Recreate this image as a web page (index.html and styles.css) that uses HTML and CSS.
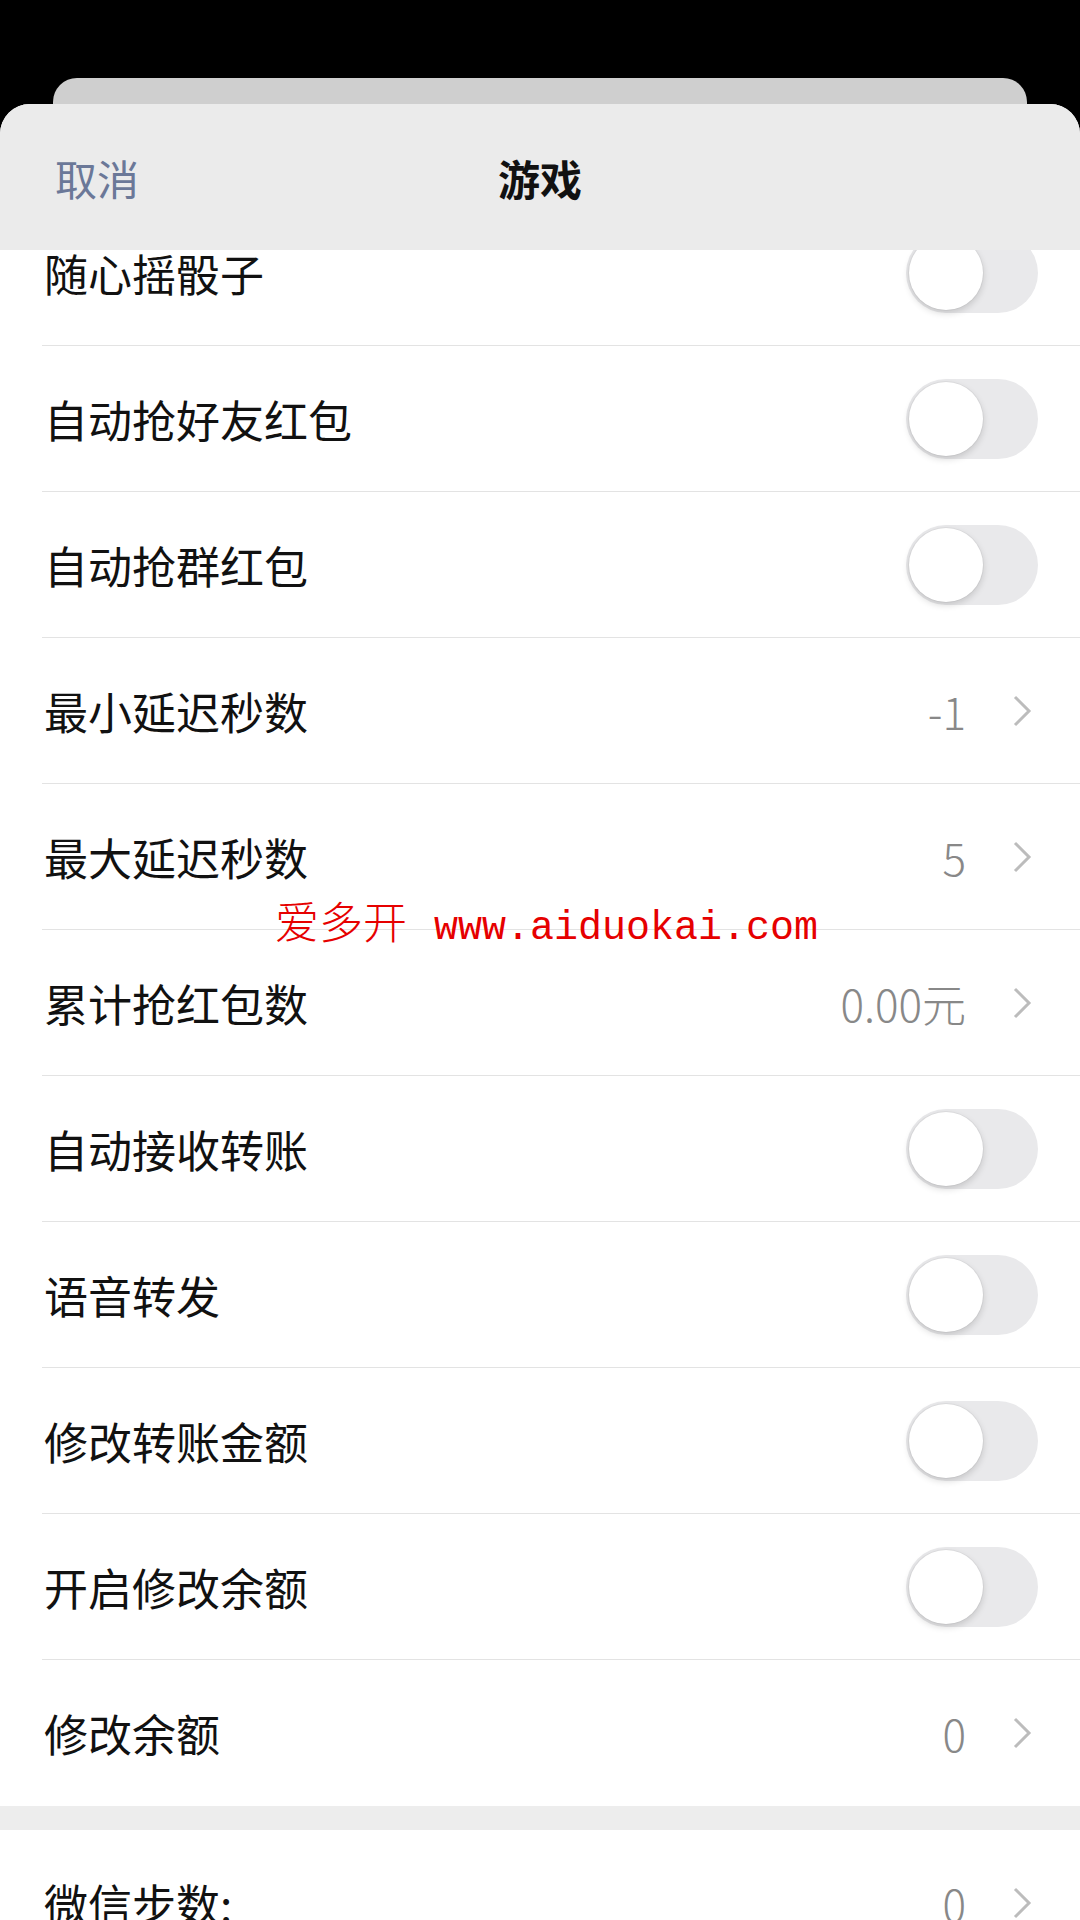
FILE: index.html
```html
<!DOCTYPE html>
<html lang="zh-CN">
<head>
    <meta charset="UTF-8">
    <meta name="viewport" content="width=device-width, initial-scale=1.0">
    <title>游戏</title>
    <link rel="stylesheet" href="styles.css">
</head>
<body>

<div class="back-card"></div>

<div class="sheet">
    <!-- Nav bar -->
    <div class="nav">
        <span class="nav-cancel">取消</span>
        <span class="nav-title">游戏</span>
        <span></span>
    </div>

    <!-- Settings list -->
    <div class="list">
        <div class="row">
            <span class="label">随心摇骰子</span>
            <span class="switch"><span class="knob"></span></span>
        </div>
        <div class="row">
            <span class="label">自动抢好友红包</span>
            <span class="switch"><span class="knob"></span></span>
        </div>
        <div class="row">
            <span class="label">自动抢群红包</span>
            <span class="switch"><span class="knob"></span></span>
        </div>
        <div class="row">
            <span class="label">最小延迟秒数</span>
            <span class="value">-1</span>
            <svg class="chevron" viewBox="0 0 20 32"><polyline points="3,2 17,16 3,30"/></svg>
        </div>
        <div class="row">
            <span class="label">最大延迟秒数</span>
            <span class="value">5</span>
            <svg class="chevron" viewBox="0 0 20 32"><polyline points="3,2 17,16 3,30"/></svg>
        </div>
        <div class="row">
            <span class="label">累计抢红包数</span>
            <span class="value">0.00元</span>
            <svg class="chevron" viewBox="0 0 20 32"><polyline points="3,2 17,16 3,30"/></svg>
        </div>
        <div class="row">
            <span class="label">自动接收转账</span>
            <span class="switch"><span class="knob"></span></span>
        </div>
        <div class="row">
            <span class="label">语音转发</span>
            <span class="switch"><span class="knob"></span></span>
        </div>
        <div class="row">
            <span class="label">修改转账金额</span>
            <span class="switch"><span class="knob"></span></span>
        </div>
        <div class="row">
            <span class="label">开启修改余额</span>
            <span class="switch"><span class="knob"></span></span>
        </div>
        <div class="row">
            <span class="label">修改余额</span>
            <span class="value">0</span>
            <svg class="chevron" viewBox="0 0 20 32"><polyline points="3,2 17,16 3,30"/></svg>
        </div>
    </div>

    <div class="band"></div>

    <div class="list">
        <div class="row">
            <span class="label">微信步数:</span>
            <span class="value">0</span>
            <svg class="chevron" viewBox="0 0 20 32"><polyline points="3,2 17,16 3,30"/></svg>
        </div>
    </div>
</div>

<!-- Watermark -->
<div class="watermark">
    <span class="wm-cn">爱多开</span>
    <span class="wm-url">www.aiduokai.com</span>
</div>

</body>
</html>
```

FILE: styles.css
```css
body {
    margin: 0;
    height: 1920px;
    overflow: hidden;
    background-color: #000;
    font-family: "Noto Sans CJK SC", "Noto Sans", sans-serif;
    position: relative;
}

.back-card {
    margin: 78px 53px 0;
    height: 26px;
    background-color: #cfcfcf;
    border-radius: 24px 24px 0 0;
}

.sheet {
    background-color: #fff;
    border-radius: 30px 30px 0 0;
    overflow: hidden;
    height: 1816px;
}

.nav {
    position: relative;
    z-index: 1;
    height: 146px;
    background-color: #ebebeb;
    display: grid;
    grid-template-columns: 1fr auto 1fr;
    align-items: center;
    padding: 0 55px;
    font-size: 42px;
}

.nav-cancel {
    color: #6b7898;
}

.nav-title {
    color: #111;
    font-weight: bold;
}

.list {
    background-color: #fff;
}

.nav + .list {
    margin-top: -50px;
}

.row {
    height: 146px;
    box-sizing: border-box;
    margin-left: 42px;
    padding: 0 42px 0 2px;
    display: flex;
    align-items: center;
    border-bottom: 1px solid #e3e3e3;
}

.row:last-child {
    border-bottom: none;
}

.label {
    flex: 1;
    font-size: 44px;
    color: #111;
}

.value {
    font-size: 44px;
    font-weight: 300;
    color: #888;
    margin-right: 46px;
}

.chevron {
    width: 20px;
    height: 32px;
    margin-right: 6px;
    fill: none;
    stroke: #bcbcbc;
    stroke-width: 3;
}

.switch {
    width: 132px;
    height: 80px;
    border-radius: 40px;
    background-color: #e9e9eb;
    display: flex;
    align-items: center;
    padding-left: 3px;
    box-sizing: border-box;
}

.knob {
    width: 74px;
    height: 74px;
    border-radius: 50%;
    background-color: #fff;
    box-shadow: 0 3px 7px rgba(0, 0, 0, 0.16), 0 0 0 1px rgba(0, 0, 0, 0.04);
}

.band {
    height: 24px;
    background-color: #ededed;
}

.watermark {
    position: absolute;
    top: 888px;
    left: 275px;
    display: flex;
    align-items: baseline;
    color: #e60000;
    white-space: nowrap;
}

.wm-cn {
    font-size: 44px;
    font-weight: 300;
    margin-right: 27px;
}

.wm-url {
    font-family: "Liberation Mono", monospace;
    font-size: 40px;
}
```
